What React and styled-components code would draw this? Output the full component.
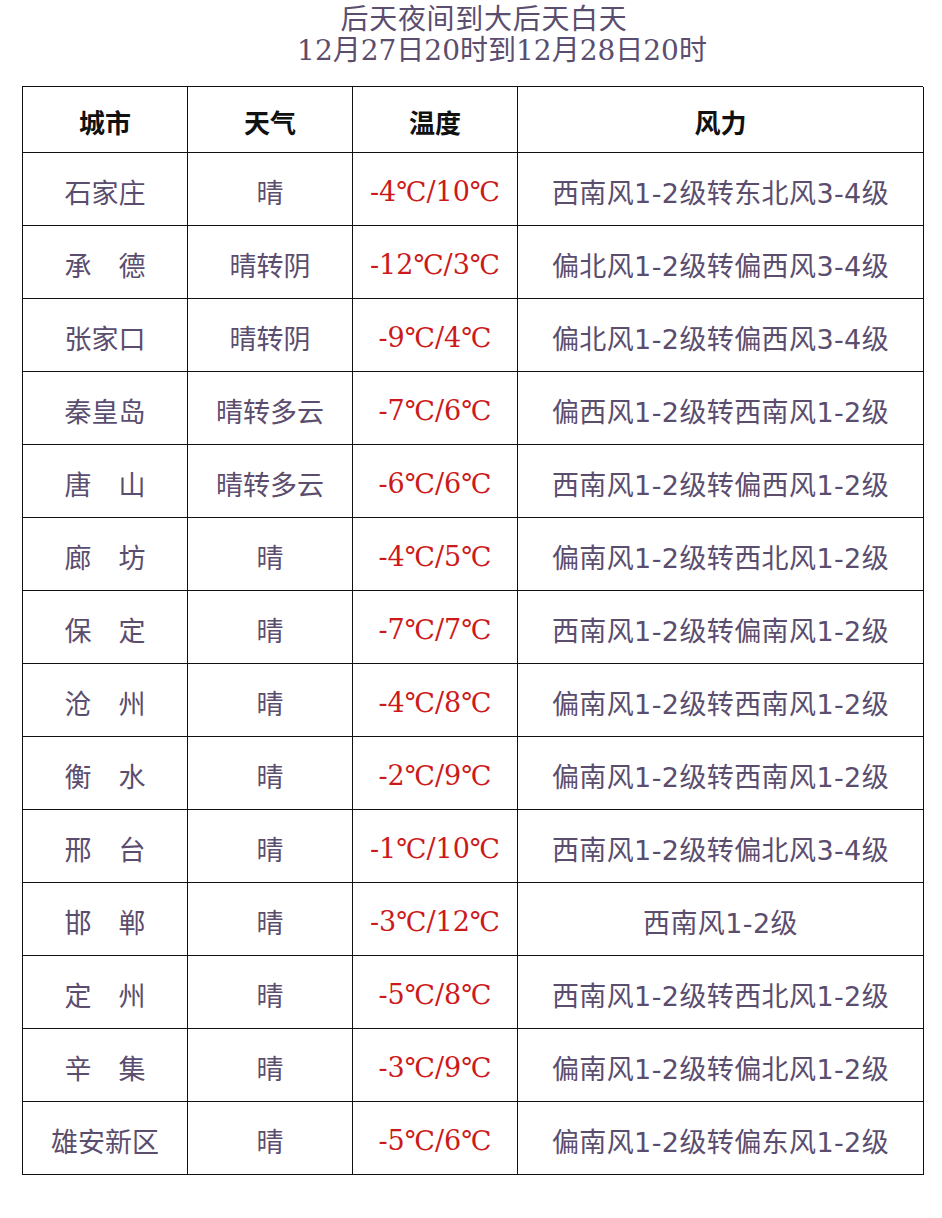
import styled, { createGlobalStyle } from "styled-components"

const GlobalStyle = createGlobalStyle`
    body {
        margin:0;
        background:#ffffff;
        font-family:"Liberation Serif", "Noto Sans CJK SC", serif;
    }
`

const Page = styled.div`
    width:942px;
    height:1218px;
    padding-top:4px;
    box-sizing:border-box;
`

const TitleLine = styled.div`
    text-align:center;
    font-family:"DejaVu Serif", "Noto Sans CJK SC", serif;
    font-size:28px;
    line-height:31px;
    letter-spacing:${props => props.spacing || 0}px;
    color:#5b4d6e;
    padding-left:${props => props.shift * 2}px;
`

const Table = styled.div`
    margin:20px 0 0 22px;
    width:901px;
    display:grid;
    grid-template-columns:165px 165px 165px 406px;
    border-top:1.5px solid #111;
    border-left:1.5px solid #111;
    box-sizing:border-box;
`

const fonts = {
    temp: '"DejaVu Serif", "Noto Sans CJK SC", serif',
    wind: '"DejaVu Sans", "Noto Sans CJK SC", sans-serif',
    text: '"Liberation Serif", "Noto Sans CJK SC", serif',
}

const Cell = styled.div`
    height:${props => props.head ? 66 : 73}px;
    display:flex;
    align-items:center;
    justify-content:center;
    border-right:1.5px solid #111;
    border-bottom:1.5px solid #111;
    box-sizing:border-box;
    font-family:${props => fonts[props.kind || 'text']};
    font-size:${props => props.head ? 26 : 27}px;
    letter-spacing:${props => props.kind === 'wind' ? 0.4 : 0}px;
    color:${props => props.head ? '#111' : props.kind === 'temp' ? '#cc1a1a' : '#5b4d6e'};
    font-weight:${props => props.head ? 'bold' : 'normal'};
    white-space:pre;
    padding-top:4px;
`

const rows = [
    ['石家庄', '晴', '-4℃/10℃', '西南风1-2级转东北风3-4级'],
    ['承　德', '晴转阴', '-12℃/3℃', '偏北风1-2级转偏西风3-4级'],
    ['张家口', '晴转阴', '-9℃/4℃', '偏北风1-2级转偏西风3-4级'],
    ['秦皇岛', '晴转多云', '-7℃/6℃', '偏西风1-2级转西南风1-2级'],
    ['唐　山', '晴转多云', '-6℃/6℃', '西南风1-2级转偏西风1-2级'],
    ['廊　坊', '晴', '-4℃/5℃', '偏南风1-2级转西北风1-2级'],
    ['保　定', '晴', '-7℃/7℃', '西南风1-2级转偏南风1-2级'],
    ['沧　州', '晴', '-4℃/8℃', '偏南风1-2级转西南风1-2级'],
    ['衡　水', '晴', '-2℃/9℃', '偏南风1-2级转西南风1-2级'],
    ['邢　台', '晴', '-1℃/10℃', '西南风1-2级转偏北风3-4级'],
    ['邯　郸', '晴', '-3℃/12℃', '西南风1-2级'],
    ['定　州', '晴', '-5℃/8℃', '西南风1-2级转西北风1-2级'],
    ['辛　集', '晴', '-3℃/9℃', '偏南风1-2级转偏北风1-2级'],
    ['雄安新区', '晴', '-5℃/6℃', '偏南风1-2级转偏东风1-2级'],
]

export default function App() {
    return (
        <>
            <GlobalStyle />
            <Page>
                <TitleLine shift={13} spacing={0.7}>后天夜间到大后天白天</TitleLine>
                <TitleLine shift={31}>12月27日20时到12月28日20时</TitleLine>
                <Table>
                    <Cell head>城市</Cell>
                    <Cell head>天气</Cell>
                    <Cell head>温度</Cell>
                    <Cell head>风力</Cell>
                    {rows.map((r, i) => (
                        <>
                            <Cell key={i + 'a'}>{r[0]}</Cell>
                            <Cell key={i + 'b'}>{r[1]}</Cell>
                            <Cell key={i + 'c'} kind="temp">{r[2]}</Cell>
                            <Cell key={i + 'd'} kind="wind">{r[3]}</Cell>
                        </>
                    ))}
                </Table>
            </Page>
        </>
    )
}
